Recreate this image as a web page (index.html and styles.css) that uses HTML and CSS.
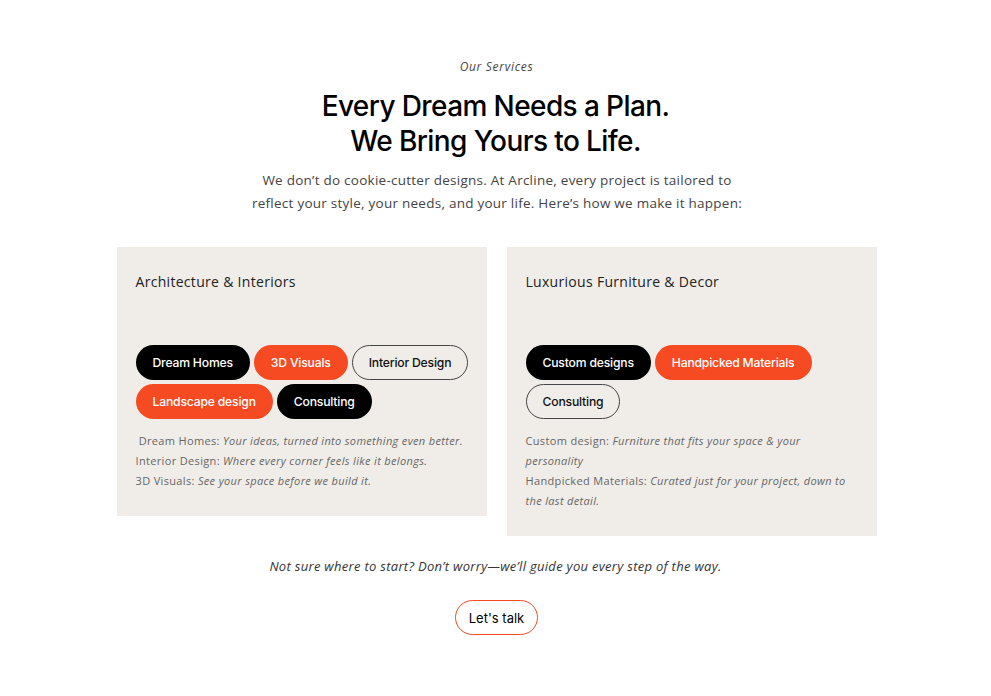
FILE: index.html
```html
<!DOCTYPE html>
<html lang="en">
<head>
<meta charset="utf-8">
<title>Our Services</title>
<link rel="stylesheet" href="styles.css">
</head>
<body>
<section class="services">
  <p class="eyebrow">Our Services</p>
  <h1 class="title">Every Dream Needs a Plan.<br>We Bring Yours to Life.</h1>
  <p class="lead">We don’t do cookie-cutter designs. At Arcline, every project is tailored to<br>reflect your style, your needs, and your life. Here’s how we make it happen:</p>

  <div class="cards">
    <article class="card">
      <h2 class="card-title">Architecture &amp; Interiors</h2>
      <div class="pills">
        <span class="pill pill-dark">Dream Homes</span>
        <span class="pill pill-orange">3D Visuals</span>
        <span class="pill pill-outline">Interior Design</span>
        <span class="pill pill-orange">Landscape design</span>
        <span class="pill pill-dark">Consulting</span>
      </div>
      <p class="desc">&nbsp;Dream Homes: <em>Your ideas, turned into something even better.</em><br>Interior Design: <em>Where every corner feels like it belongs.</em><br>3D Visuals: <em>See your space before we build it.</em></p>
    </article>
    <article class="card">
      <h2 class="card-title">Luxurious Furniture &amp; Decor</h2>
      <div class="pills">
        <span class="pill pill-dark">Custom designs</span>
        <span class="pill pill-orange">Handpicked Materials</span>
        <span class="pill pill-outline">Consulting</span>
      </div>
      <p class="desc desc-narrow">Custom design: <em>Furniture that fits your space &amp; your personality</em><br>Handpicked Materials: <em>Curated just for your project, down to the last detail.</em></p>
    </article>
  </div>

  <p class="note">Not sure where to start? Don’t worry—we’ll guide you every step of the way.</p>
  <a class="cta" href="#">Let's talk</a>
</section>
</body>
</html>
```

FILE: styles.css
```css
* { box-sizing: border-box; }
html, body { margin: 0; padding: 0; background: #fff; }
body {
  font-family: "Open Sans", "Liberation Sans", sans-serif;
  color: #222;
}
.services {
  display: flex;
  flex-direction: column;
  align-items: center;
  padding-top: 58px;
}
.eyebrow {
  margin: 0 0 0 2px;
  font-size: 12px;
  line-height: 17px;
  font-style: italic;
  color: #444;
  letter-spacing: 0.7px;
}
.title {
  margin: 14px 0 0;
  font-family: Inter, "Liberation Sans", sans-serif;
  font-weight: 500;
  font-size: 28px;
  line-height: 35px;
  text-align: center;
  color: #000;
  letter-spacing: -0.6px;
}
.lead {
  margin: 10px 0 0 3px;
  font-size: 13.5px;
  line-height: 23px;
  text-align: center;
  color: #444;
  letter-spacing: 0.25px;
}
.cards {
  display: flex;
  gap: 20px;
  align-items: flex-start;
  margin: 32px 0 0 2px;
}
.card {
  width: 370px;
  background: #f0ede8;
  padding: 25px 16px 25px 19px;
}
.card-title {
  margin: 0;
  font-weight: 400;
  font-size: 14px;
  line-height: 20px;
  color: #222;
  letter-spacing: 0.3px;
}
.pills {
  display: flex;
  flex-wrap: wrap;
  gap: 4px 4px;
  margin-top: 53px;
}
.pill {
  display: inline-flex;
  align-items: center;
  height: 35px;
  padding: 0 16px;
  border-radius: 18px;
  font-family: Inter, "Liberation Sans", sans-serif;
  font-weight: 500;
  font-size: 12.2px;
  letter-spacing: -0.2px;
  border: 1px solid transparent;
  white-space: nowrap;
}
.pill-dark { background: #000; color: #fff; }
.pill-orange { background: #f64a22; color: #fff; }
.pill-outline { background: transparent; color: #111; border-color: #444; }
.desc {
  margin: 12px 0 0;
  max-width: 332px;
  font-size: 11px;
  line-height: 20px;
  color: #666;
  letter-spacing: 0.34px;
}
.desc-narrow { max-width: 322px; }
.desc em { font-style: italic; }
.note {
  margin: 20px 0 0;
  font-size: 13px;
  line-height: 20px;
  font-style: italic;
  color: #333;
  letter-spacing: 0.3px;
}
.cta {
  margin: 24px 0 0 2px;
  display: inline-flex;
  align-items: center;
  justify-content: center;
  width: 83px;
  height: 35px;
  border: 1px solid #f64a22;
  border-radius: 18px;
  font-family: Inter, "Liberation Sans", sans-serif;
  font-size: 13px;
  color: #000;
  text-decoration: none;
}
```
